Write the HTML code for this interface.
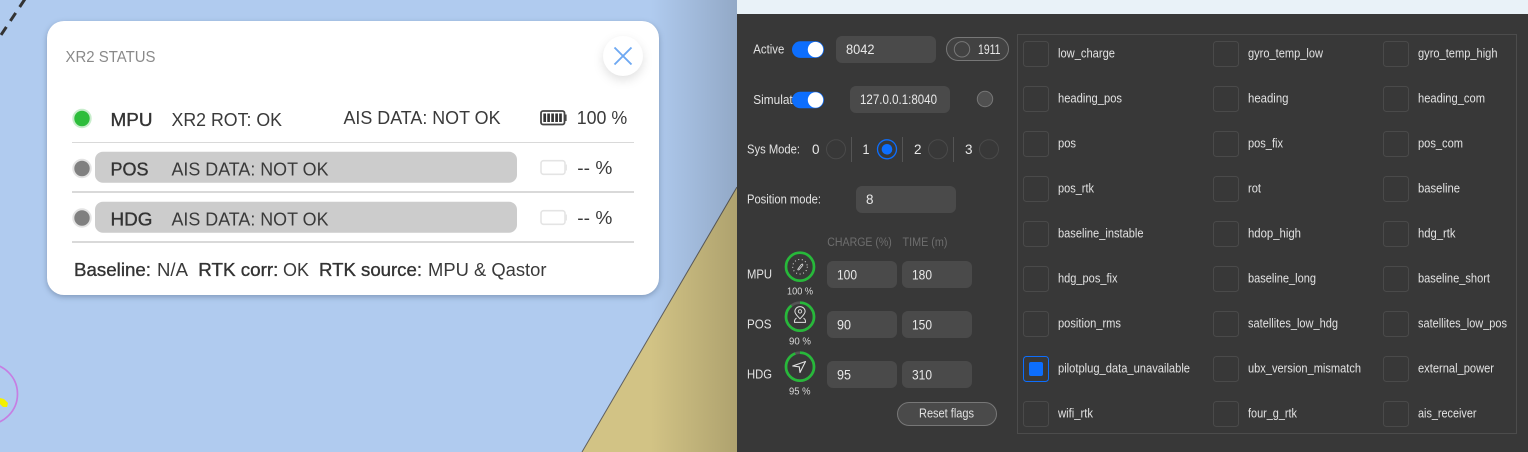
<!DOCTYPE html>
<html lang="en"><head><meta charset="utf-8"><title>XR2 Status</title>
<style>
html,body{margin:0;padding:0;width:1528px;height:452px;overflow:hidden;background:#b0cbef}
svg{display:block}
text{font-family:"Liberation Sans",sans-serif;white-space:pre}
.d{fill:#3a3a3a;font-size:18.5px}
.m{fill:#333;font-size:18.5px;stroke:#333;stroke-width:.35}
.l{fill:#e2e2e2;font-size:12.6px}
.v{fill:#e8e8e8;font-size:13.5px}
.h{fill:#6e6e6e;font-size:11.5px}
.p{fill:#d8d8d8;font-size:10px}
.b{fill:none;stroke:#4a4a4a;stroke-width:1}
.i{fill:#4a4a4a}
</style></head><body>
<svg xmlns="http://www.w3.org/2000/svg" width="1528" height="452" viewBox="0 0 1528 452">
<defs>
<linearGradient id="sh" x1="0" x2="1" y1="0" y2="0"><stop offset="0" stop-color="#000" stop-opacity="0"/><stop offset="1" stop-color="#000" stop-opacity=".17"/></linearGradient>
</defs>
<!-- map -->
<rect width="737" height="452" fill="#b0cbef"/>
<polygon points="737,187 737,452 582,452" fill="#d2c385"/>
<line x1="737" y1="187" x2="582" y2="452" stroke="#5f5f5f" stroke-width="1"/>
<rect x="650" y="0" width="87" height="452" fill="url(#sh)"/>
<line x1="25" y1="-1" x2="-1" y2="38" stroke="#333" stroke-width="3" stroke-dasharray="9.6 7.2"/>
<circle cx="-13" cy="394" r="30.5" fill="none" stroke="#c67ee2" stroke-width="1.7"/>
<polygon points="0,398 4,399 8,403 7,407 3,407 0,404" fill="#f4f000"/>
<!-- card -->
<rect x="47" y="21" width="612" height="274" rx="17" fill="#fff" style="filter:drop-shadow(0 2px 3px rgba(40,60,90,.35))"/>
<text x="65.5" y="62" font-size="16" fill="#8a8a8a" textLength="90" lengthAdjust="spacingAndGlyphs">XR2 STATUS</text>
<circle cx="623" cy="56" r="20" fill="#fff" style="filter:drop-shadow(0 4px 5px rgba(0,0,0,.12))"/>
<path d="M614.5 47.5 L631.5 64.5 M631.5 47.5 L614.5 64.5" stroke="#6ea8f2" stroke-width="1.9" fill="none"/>
<!-- rows -->
<circle cx="82" cy="118.5" r="8.7" fill="#2dbd3b" stroke="#c8edcc" stroke-width="2"/>
<text class="m" x="110.5" y="126" textLength="42" lengthAdjust="spacingAndGlyphs">MPU</text>
<text class="d" x="171.5" y="126" textLength="110.5" lengthAdjust="spacingAndGlyphs">XR2 ROT: OK</text>
<text class="d" x="343.5" y="124" textLength="157" lengthAdjust="spacingAndGlyphs">AIS DATA: NOT OK</text>
<rect x="541" y="111" width="23.5" height="13.5" rx="2" fill="none" stroke="#444" stroke-width="1.8"/>
<rect x="565" y="114.5" width="1.6" height="6.5" fill="#444"/>
<path d="M544.7 113.5v8.5M548.6 113.5v8.5M552.6 113.5v8.5M556.6 113.5v8.5M560.5 113.5v8.5" stroke="#333" stroke-width="2.7"/>
<text class="d" x="576.7" y="124" textLength="50.5" lengthAdjust="spacingAndGlyphs">100 %</text>
<rect x="72" y="142" width="562" height="1" fill="#d9d9d9"/>

<rect x="95" y="151.7" width="422" height="31" rx="8" fill="#ccc"/>
<circle cx="82" cy="168.5" r="8.7" fill="#808080" stroke="#e3e3e3" stroke-width="2"/>
<text class="m" x="110.5" y="175.5" textLength="38" lengthAdjust="spacingAndGlyphs">POS</text>
<text class="d" x="171.5" y="175.5" textLength="157" lengthAdjust="spacingAndGlyphs">AIS DATA: NOT OK</text>
<rect x="541" y="160.7" width="24" height="13.6" rx="2.5" fill="#fff" stroke="#e4e4e4" stroke-width="1.6"/>
<rect x="565.7" y="164.5" width="1.2" height="6" fill="#e4e4e4"/>
<text class="d" x="577.3" y="174" textLength="35" lengthAdjust="spacingAndGlyphs">-- %</text>
<rect x="72" y="191" width="562" height="2" fill="#d9d9d9"/>

<rect x="95" y="201.7" width="422" height="31" rx="8" fill="#ccc"/>
<circle cx="82" cy="218" r="8.7" fill="#808080" stroke="#e3e3e3" stroke-width="2"/>
<text class="m" x="110.5" y="225.5" textLength="42" lengthAdjust="spacingAndGlyphs">HDG</text>
<text class="d" x="171.5" y="225.5" textLength="157" lengthAdjust="spacingAndGlyphs">AIS DATA: NOT OK</text>
<rect x="541" y="210.7" width="24" height="13.6" rx="2.5" fill="#fff" stroke="#e4e4e4" stroke-width="1.6"/>
<rect x="565.7" y="214.5" width="1.2" height="6" fill="#e4e4e4"/>
<text class="d" x="577.3" y="224" textLength="35" lengthAdjust="spacingAndGlyphs">-- %</text>
<rect x="72" y="241" width="562" height="2" fill="#d9d9d9"/>

<text class="m" x="74" y="276" textLength="77" lengthAdjust="spacingAndGlyphs">Baseline:</text>
<text class="d" x="157" y="276" textLength="31" lengthAdjust="spacingAndGlyphs">N/A</text>
<text class="m" x="198.3" y="276" textLength="80" lengthAdjust="spacingAndGlyphs">RTK corr:</text>
<text class="d" x="283" y="276" textLength="26" lengthAdjust="spacingAndGlyphs">OK</text>
<text class="m" x="319" y="276" textLength="103" lengthAdjust="spacingAndGlyphs">RTK source:</text>
<text class="d" x="428" y="276" textLength="118.5" lengthAdjust="spacingAndGlyphs">MPU &amp; Qastor</text>

<!-- dark panel -->
<rect x="737" y="0" width="791" height="452" fill="#383838"/>
<rect x="737" y="0" width="791" height="14" fill="#e9f2f8"/>

<text class="l" x="753.3" y="53.5" textLength="31" lengthAdjust="spacingAndGlyphs">Active</text>
<rect x="792" y="41.3" width="32" height="16.6" rx="8.3" fill="#0d6efd"/>
<circle cx="815.5" cy="49.6" r="7.7" fill="#fff"/>
<rect x="836" y="36" width="100" height="27" rx="6" class="i"/>
<text class="v" x="846" y="54" textLength="28.5" lengthAdjust="spacingAndGlyphs">8042</text>
<rect x="946.5" y="37.5" width="62" height="23" rx="11.5" fill="#424242" stroke="#777"/>
<circle cx="962" cy="49.3" r="7.7" fill="none" stroke="#777"/>
<text class="v" x="978" y="54" textLength="22.5" lengthAdjust="spacingAndGlyphs">1911</text>

<text class="l" x="753.3" y="104" textLength="46" lengthAdjust="spacingAndGlyphs">Simulate</text>
<rect x="792" y="91.7" width="32" height="16.6" rx="8.3" fill="#0d6efd"/>
<circle cx="815.5" cy="100" r="7.7" fill="#fff"/>
<rect x="850" y="86" width="100" height="27" rx="6" class="i"/>
<text class="v" x="860" y="104" textLength="77" lengthAdjust="spacingAndGlyphs">127.0.0.1:8040</text>
<circle cx="985" cy="99" r="7.7" fill="#505050" stroke="#777"/>

<text class="l" x="747" y="153.5" textLength="53" lengthAdjust="spacingAndGlyphs">Sys Mode:</text>
<text class="v" x="812" y="154" textLength="7.5" lengthAdjust="spacingAndGlyphs">0</text>
<circle cx="836" cy="149.3" r="9.5" fill="none" stroke="#4a4a4a"/>
<rect x="851" y="137" width="1" height="25" fill="#555"/>
<text class="v" x="862.5" y="154" textLength="7" lengthAdjust="spacingAndGlyphs">1</text>
<circle cx="887" cy="149.3" r="9.5" fill="none" stroke="#0d6efd" stroke-width="1.3"/>
<circle cx="887" cy="149.3" r="5.3" fill="#0d6efd"/>
<rect x="902" y="137" width="1" height="25" fill="#555"/>
<text class="v" x="914" y="154" textLength="7.5" lengthAdjust="spacingAndGlyphs">2</text>
<circle cx="938" cy="149.3" r="9.5" fill="none" stroke="#4a4a4a"/>
<rect x="953" y="137" width="1" height="25" fill="#555"/>
<text class="v" x="965" y="154" textLength="7.5" lengthAdjust="spacingAndGlyphs">3</text>
<circle cx="989" cy="149.3" r="9.5" fill="none" stroke="#4a4a4a"/>

<text class="l" x="747" y="203.5" textLength="74" lengthAdjust="spacingAndGlyphs">Position mode:</text>
<rect x="856" y="186" width="100" height="27" rx="6" class="i"/>
<text class="v" x="866" y="204" textLength="7.5" lengthAdjust="spacingAndGlyphs">8</text>

<text class="h" x="827.3" y="246" textLength="64.5" lengthAdjust="spacingAndGlyphs">CHARGE (%)</text>
<text class="h" x="902.5" y="246" textLength="45" lengthAdjust="spacingAndGlyphs">TIME (m)</text>

<text class="l" x="747" y="278.5" textLength="25" lengthAdjust="spacingAndGlyphs">MPU</text>
<text class="l" x="747" y="328.5" textLength="24.5" lengthAdjust="spacingAndGlyphs">POS</text>
<text class="l" x="747" y="378.5" textLength="25" lengthAdjust="spacingAndGlyphs">HDG</text>

<!-- rings -->
<circle cx="800" cy="266.7" r="14" fill="none" stroke="#27b83a" stroke-width="2.7"/>
<circle cx="800" cy="316.7" r="14" fill="none" stroke="#555" stroke-width="2.7"/>
<circle cx="800" cy="316.7" r="14" fill="none" stroke="#27b83a" stroke-width="2.7" pathLength="100" stroke-dasharray="90 100" transform="rotate(-90 800 316.7)"/>
<circle cx="800" cy="366.7" r="14" fill="none" stroke="#555" stroke-width="2.7"/>
<circle cx="800" cy="366.7" r="14" fill="none" stroke="#27b83a" stroke-width="2.7" pathLength="100" stroke-dasharray="95 100" transform="rotate(-90 800 366.7)"/>
<!-- compass icon -->
<circle cx="800" cy="266.7" r="7.3" fill="none" stroke="#ddd" stroke-width="1" stroke-dasharray="1 2.6"/>
<path d="M797.8 269.2 L801.2 264.6 Q802.4 263.6 802.8 264.4 L802.8 265.4 L799 269.8 Q797.6 270.4 797.8 269.2Z" fill="none" stroke="#e6e6e6" stroke-width=".8"/>
<!-- pin icon -->
<path d="M800 318.8 C797.5 316 794.9 314 794.9 311.5 A5.1 4.9 0 0 1 805.1 311.5 C805.1 314 802.5 316 800 318.8Z" fill="none" stroke="#e2e2e2" stroke-width="1"/>
<circle cx="800" cy="311.4" r="1.7" fill="none" stroke="#e2e2e2" stroke-width=".9"/>
<path d="M796.5 318 Q794 320 794.5 322.4 H805.5 Q806 320 803.5 318" fill="none" stroke="#e2e2e2" stroke-width="1"/>
<!-- nav icon -->
<path d="M792.7 366 L805.5 361.5 L800 372.5 L799.3 366.8Z" fill="none" stroke="#e2e2e2" stroke-width="1.1" stroke-linejoin="round"/>

<text class="p" x="787" y="294.5" textLength="26" lengthAdjust="spacingAndGlyphs">100 %</text>
<text class="p" x="789" y="344.5" textLength="22" lengthAdjust="spacingAndGlyphs">90 %</text>
<text class="p" x="789" y="394.5" textLength="21.5" lengthAdjust="spacingAndGlyphs">95 %</text>

<rect x="827" y="261" width="70" height="27" rx="6" class="i"/><rect x="902" y="261" width="70" height="27" rx="6" class="i"/>
<rect x="827" y="311" width="70" height="27" rx="6" class="i"/><rect x="902" y="311" width="70" height="27" rx="6" class="i"/>
<rect x="827" y="361" width="70" height="27" rx="6" class="i"/><rect x="902" y="361" width="70" height="27" rx="6" class="i"/>
<text class="v" x="837" y="279.5" textLength="20" lengthAdjust="spacingAndGlyphs">100</text>
<text class="v" x="912" y="279.5" textLength="20" lengthAdjust="spacingAndGlyphs">180</text>
<text class="v" x="837" y="329.5" textLength="14" lengthAdjust="spacingAndGlyphs">90</text>
<text class="v" x="912" y="329.5" textLength="20" lengthAdjust="spacingAndGlyphs">150</text>
<text class="v" x="837" y="379.5" textLength="14" lengthAdjust="spacingAndGlyphs">95</text>
<text class="v" x="912" y="379.5" textLength="20" lengthAdjust="spacingAndGlyphs">310</text>

<rect x="897.5" y="402.5" width="99" height="23" rx="11.5" fill="#4a4a4a" stroke="#777"/>
<text class="l" x="919" y="417.5" textLength="55" lengthAdjust="spacingAndGlyphs">Reset flags</text>

<!-- flags -->
<rect x="1017.5" y="34.5" width="499" height="399" fill="none" stroke="#4c4c4c"/>

<rect class="b" x="1023.5" y="41.5" width="25" height="25" rx="3"/><text class="l" x="1058" y="57.5" textLength="57" lengthAdjust="spacingAndGlyphs">low_charge</text>
<rect class="b" x="1213.5" y="41.5" width="25" height="25" rx="3"/><text class="l" x="1248" y="57.5" textLength="75" lengthAdjust="spacingAndGlyphs">gyro_temp_low</text>
<rect class="b" x="1383.5" y="41.5" width="25" height="25" rx="3"/><text class="l" x="1418" y="57.5" textLength="79.5" lengthAdjust="spacingAndGlyphs">gyro_temp_high</text>

<rect class="b" x="1023.5" y="86.5" width="25" height="25" rx="3"/><text class="l" x="1058" y="102.5" textLength="64" lengthAdjust="spacingAndGlyphs">heading_pos</text>
<rect class="b" x="1213.5" y="86.5" width="25" height="25" rx="3"/><text class="l" x="1248" y="102.5" textLength="40.5" lengthAdjust="spacingAndGlyphs">heading</text>
<rect class="b" x="1383.5" y="86.5" width="25" height="25" rx="3"/><text class="l" x="1418" y="102.5" textLength="67" lengthAdjust="spacingAndGlyphs">heading_com</text>

<rect class="b" x="1023.5" y="131.5" width="25" height="25" rx="3"/><text class="l" x="1058" y="147.5" textLength="18" lengthAdjust="spacingAndGlyphs">pos</text>
<rect class="b" x="1213.5" y="131.5" width="25" height="25" rx="3"/><text class="l" x="1248" y="147.5" textLength="35" lengthAdjust="spacingAndGlyphs">pos_fix</text>
<rect class="b" x="1383.5" y="131.5" width="25" height="25" rx="3"/><text class="l" x="1418" y="147.5" textLength="45" lengthAdjust="spacingAndGlyphs">pos_com</text>

<rect class="b" x="1023.5" y="176.5" width="25" height="25" rx="3"/><text class="l" x="1058" y="192.5" textLength="36" lengthAdjust="spacingAndGlyphs">pos_rtk</text>
<rect class="b" x="1213.5" y="176.5" width="25" height="25" rx="3"/><text class="l" x="1248" y="192.5" textLength="13" lengthAdjust="spacingAndGlyphs">rot</text>
<rect class="b" x="1383.5" y="176.5" width="25" height="25" rx="3"/><text class="l" x="1418" y="192.5" textLength="42" lengthAdjust="spacingAndGlyphs">baseline</text>

<rect class="b" x="1023.5" y="221.5" width="25" height="25" rx="3"/><text class="l" x="1058" y="237.5" textLength="85.5" lengthAdjust="spacingAndGlyphs">baseline_instable</text>
<rect class="b" x="1213.5" y="221.5" width="25" height="25" rx="3"/><text class="l" x="1248" y="237.5" textLength="53" lengthAdjust="spacingAndGlyphs">hdop_high</text>
<rect class="b" x="1383.5" y="221.5" width="25" height="25" rx="3"/><text class="l" x="1418" y="237.5" textLength="37.5" lengthAdjust="spacingAndGlyphs">hdg_rtk</text>

<rect class="b" x="1023.5" y="266.5" width="25" height="25" rx="3"/><text class="l" x="1058" y="282.5" textLength="59.5" lengthAdjust="spacingAndGlyphs">hdg_pos_fix</text>
<rect class="b" x="1213.5" y="266.5" width="25" height="25" rx="3"/><text class="l" x="1248" y="282.5" textLength="68" lengthAdjust="spacingAndGlyphs">baseline_long</text>
<rect class="b" x="1383.5" y="266.5" width="25" height="25" rx="3"/><text class="l" x="1418" y="282.5" textLength="72" lengthAdjust="spacingAndGlyphs">baseline_short</text>

<rect class="b" x="1023.5" y="311.5" width="25" height="25" rx="3"/><text class="l" x="1058" y="327.5" textLength="63" lengthAdjust="spacingAndGlyphs">position_rms</text>
<rect class="b" x="1213.5" y="311.5" width="25" height="25" rx="3"/><text class="l" x="1248" y="327.5" textLength="90" lengthAdjust="spacingAndGlyphs">satellites_low_hdg</text>
<rect class="b" x="1383.5" y="311.5" width="25" height="25" rx="3"/><text class="l" x="1418" y="327.5" textLength="89" lengthAdjust="spacingAndGlyphs">satellites_low_pos</text>

<rect x="1023.5" y="356.5" width="25" height="25" rx="3" fill="none" stroke="#0d6efd"/>
<rect x="1029" y="362" width="14" height="14" rx="2" fill="#0d6efd"/>
<text class="l" x="1058" y="372.5" textLength="132" lengthAdjust="spacingAndGlyphs">pilotplug_data_unavailable</text>
<rect class="b" x="1213.5" y="356.5" width="25" height="25" rx="3"/><text class="l" x="1248" y="372.5" textLength="113" lengthAdjust="spacingAndGlyphs">ubx_version_mismatch</text>
<rect class="b" x="1383.5" y="356.5" width="25" height="25" rx="3"/><text class="l" x="1418" y="372.5" textLength="76" lengthAdjust="spacingAndGlyphs">external_power</text>

<rect class="b" x="1023.5" y="401.5" width="25" height="25" rx="3"/><text class="l" x="1058" y="417.5" textLength="35" lengthAdjust="spacingAndGlyphs">wifi_rtk</text>
<rect class="b" x="1213.5" y="401.5" width="25" height="25" rx="3"/><text class="l" x="1248" y="417.5" textLength="49" lengthAdjust="spacingAndGlyphs">four_g_rtk</text>
<rect class="b" x="1383.5" y="401.5" width="25" height="25" rx="3"/><text class="l" x="1418" y="417.5" textLength="58.5" lengthAdjust="spacingAndGlyphs">ais_receiver</text>
</svg>
</body></html>
